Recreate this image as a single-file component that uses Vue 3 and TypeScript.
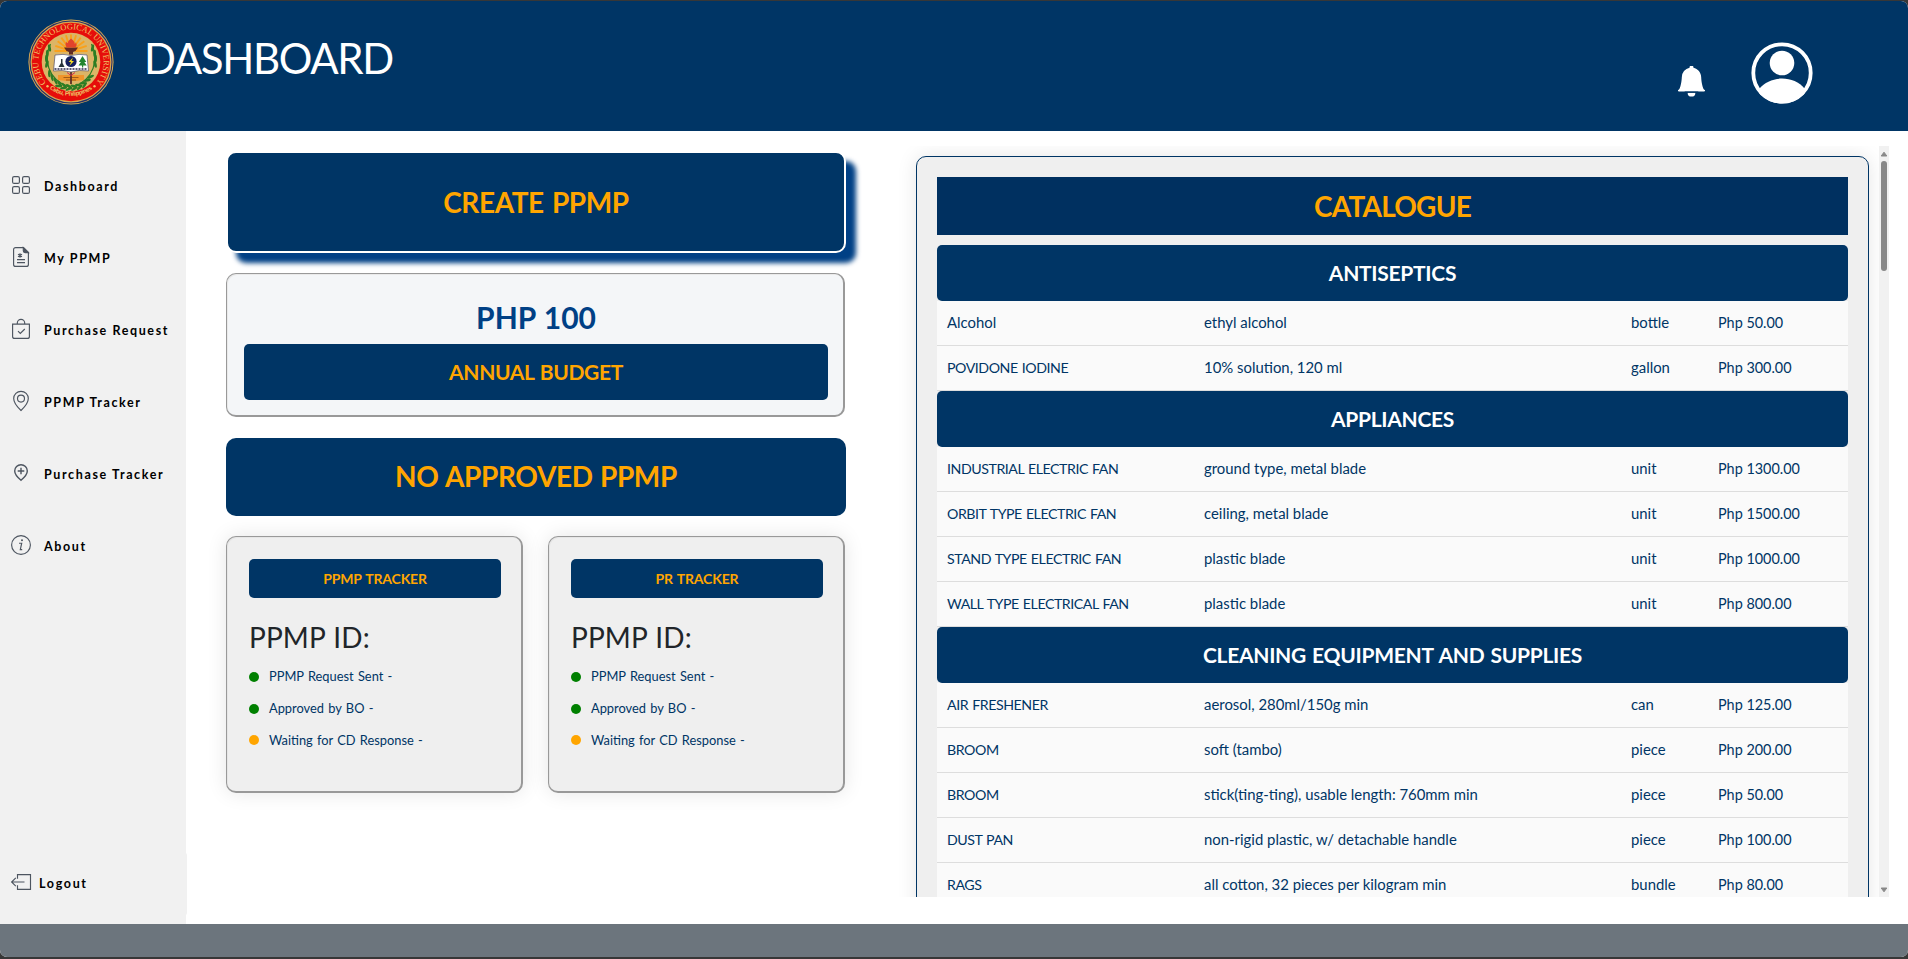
<script setup lang="ts">
interface NavItem { label: string; icon: string }
interface Product { name: string; desc: string; unit: string; price: string }
interface Category { title: string; products: Product[] }
interface Step { label: string; state: 'done' | 'waiting' }

const navItems: NavItem[] = [
  { label: 'Dashboard', icon: 'grid' },
  { label: 'My PPMP', icon: 'file' },
  { label: 'Purchase Request', icon: 'bag' },
  { label: 'PPMP Tracker', icon: 'pin' },
  { label: 'Purchase Tracker', icon: 'pinplus' },
  { label: 'About', icon: 'info' },
]

const trackers: string[] = ['PPMP TRACKER', 'PR TRACKER']

const steps: Step[] = [
  { label: 'PPMP Request Sent -', state: 'done' },
  { label: 'Approved by BO -', state: 'done' },
  { label: 'Waiting for CD Response -', state: 'waiting' },
]

const p = (name: string, desc: string, unit: string, price: string): Product => ({ name, desc, unit, price })
const isCaps = (s: string): boolean => s === s.toUpperCase()

const categories: Category[] = [
  {
    title: 'ANTISEPTICS',
    products: [
      p('Alcohol', 'ethyl alcohol', 'bottle', 'Php 50.00'),
      p('POVIDONE IODINE', '10% solution, 120 ml', 'gallon', 'Php 300.00'),
    ],
  },
  {
    title: 'APPLIANCES',
    products: [
      p('INDUSTRIAL ELECTRIC FAN', 'ground type, metal blade', 'unit', 'Php 1300.00'),
      p('ORBIT TYPE ELECTRIC FAN', 'ceiling, metal blade', 'unit', 'Php 1500.00'),
      p('STAND TYPE ELECTRIC FAN', 'plastic blade', 'unit', 'Php 1000.00'),
      p('WALL TYPE ELECTRICAL FAN', 'plastic blade', 'unit', 'Php 800.00'),
    ],
  },
  {
    title: 'CLEANING EQUIPMENT AND SUPPLIES',
    products: [
      p('AIR FRESHENER', 'aerosol, 280ml/150g min', 'can', 'Php 125.00'),
      p('BROOM', 'soft (tambo)', 'piece', 'Php 200.00'),
      p('BROOM', 'stick(ting-ting), usable length: 760mm min', 'piece', 'Php 50.00'),
      p('DUST PAN', 'non-rigid plastic, w/ detachable handle', 'piece', 'Php 100.00'),
      p('RAGS', 'all cotton, 32 pieces per kilogram min', 'bundle', 'Php 80.00'),
    ],
  },
]

const rays: number[] = [-90, -72, -54, -36, -18, 0, 18, 36, 54, 72, 90]
const leaves: number[] = [0, 1, 2, 3, 4, 5, 6, 7, 8, 9, 10]
</script>

<template>
  <div class="window">
    <header class="topbar">
      <svg class="seal" viewBox="0 0 86 86">
        <defs>
          <path id="seal-top" d="M19.2 65.2 A32.6 32.6 0 1 1 66.8 65.2" />
          <path id="seal-bottom" d="M16.5 65.5 A36.6 36.6 0 0 0 69.5 65.5" />
        </defs>
        <circle cx="43" cy="43" r="42.6" fill="#d8a850" />
        <circle cx="43" cy="43" r="41" fill="none" stroke="#26306a" stroke-width="1.1" />
        <circle cx="43" cy="43" r="39.2" fill="#e60d0a" />
        <circle cx="43" cy="43" r="29.3" fill="#dcb566" />
        <g stroke="#f9a01b" stroke-width="1.9">
          <line v-for="a in rays" :key="a" x1="43" y1="28" x2="43" y2="15.5" :transform="`rotate(${a} 43 32)`" />
        </g>
        <g fill="none" stroke="#2c7d24" stroke-width="1.2">
          <path d="M22.5 25 C15.5 40 19 60 41 68" />
          <path d="M63.5 25 C70.5 40 67 60 45 68" />
        </g>
        <g fill="#2c7d24">
          <g v-for="k in leaves" :key="k">
            <g :transform="`rotate(${-k * 11.5 + 62} 43 43)`">
              <ellipse cx="43" cy="67.5" rx="3.7" ry="1.3" transform="rotate(28 43 67.5)" />
              <ellipse v-if="k > 2 && k < 9" cx="43" cy="70" rx="3.5" ry="1.2" transform="rotate(-24 43 70)" />
            </g>
          </g>
          <ellipse cx="18.9" cy="45" rx="1.5" ry="3.9" transform="rotate(14 18.9 45)" />
          <ellipse cx="67.1" cy="45" rx="1.5" ry="3.9" transform="rotate(-14 67.1 45)" />
          <ellipse cx="18.5" cy="39.5" rx="1.5" ry="3.9" />
          <ellipse cx="67.5" cy="39.5" rx="1.5" ry="3.9" />
          <ellipse cx="21.5" cy="29" rx="1.4" ry="3.7" transform="rotate(-12 21.5 29)" />
          <ellipse cx="64.5" cy="29" rx="1.4" ry="3.7" transform="rotate(12 64.5 29)" />
          <ellipse cx="19.3" cy="34.5" rx="1.4" ry="3.7" />
          <ellipse cx="66.7" cy="34.5" rx="1.4" ry="3.7" />
        </g>
        <path d="M30 56 h26 v5 l-9 1 h-8 l-9 -1z" fill="#f0952a" />
        <path d="M35.5 58.5h15M38 61h10" stroke="#8c4c14" stroke-width=".8" />
        <path d="M43 52 v13" stroke="#5a2f25" stroke-width="1.8" />
        <path d="M27 36 q8 -1.5 16 0.5 q8 -2 16 -0.5 l1.5 16 q-9 -1.5 -17.5 1 q-9 -2.5 -17.5 -1z" fill="#fff" stroke="#54506a" stroke-width=".7" />
        <path d="M26.5 50 h33" stroke="#28264c" stroke-width="1.7" stroke-dasharray="2 1" />
        <path d="M33 40 v4 l-2.5 4 h6 l-2 -4 v-4z" fill="#27333a" />
        <path d="M54.5 37 l-3.6 6 h2 l-2.4 3.5 h3.5 v2 h1.2 v-2 h3.5 l-2.4 -3.5 h2z" fill="#23852f" />
        <circle cx="43" cy="42.5" r="5.6" fill="#15205f" />
        <path d="M45 38.5 l-4.5 4.5 h2.5 l-1.5 3.7 l4.5 -4.7 h-2.5z" fill="#f6dd23" />
        <path d="M36 28.5 h14 l-2.5 3.5 -2.5 1 v2.5 h-4 v-2.5 l-2.5 -1z" fill="#632b22" />
        <path d="M43 19.500 q4 3 3.8 5.5 q1 -.5 1 -2 q2 4 -.8 5.5 h-8 q-2.500 -2 -.8 -6 q.6 1.8 1.6 1.6 q.2 -2.4 3.2 -4.6z" fill="#e2432b" />
        <path d="M39 53.5 l4 3 4 -3" fill="none" stroke="#d32a52" stroke-width="1" />
        <text class="seal-text"><textPath href="#seal-top" startOffset="50%" text-anchor="middle" textLength="147">CEBU TECHNOLOGICAL UNIVERSITY</textPath></text>
        <text class="seal-text seal-city"><textPath href="#seal-bottom" startOffset="50%" text-anchor="middle" textLength="46">Cebu, Philippines</textPath></text>
        <circle cx="19.5" cy="67.3" r="1.2" fill="#f0c267" />
        <circle cx="66.5" cy="67.3" r="1.2" fill="#f0c267" />
      </svg>
      <h1>DASHBOARD</h1>
      <svg class="bell" viewBox="0 0 16 16" fill="#fff">
        <path d="M8 16a2 2 0 0 0 2-2H6a2 2 0 0 0 2 2m.995-14.901a1 1 0 1 0-1.99 0A5 5 0 0 0 3 6c0 1.098-.5 6-2 7h14c-1.5-1-2-5.902-2-7 0-2.42-1.72-4.44-4.005-4.901" transform="translate(0 -.2)" />
        <path d="M1.400 12.700h13.200" stroke="#fff" stroke-width=".8" stroke-linecap="round" />
        <path d="M4.5 13.5h7" stroke="#003565" stroke-width=".7" />
      </svg>
      <svg class="avatar" viewBox="0 0 62 62">
        <defs><clipPath id="avatar-clip"><circle cx="31" cy="31" r="30.5" /></clipPath></defs>
        <circle cx="31" cy="31" r="28.7" fill="none" stroke="#fff" stroke-width="3.8" />
        <circle cx="31" cy="21" r="12.3" fill="#fff" />
        <path d="M8 47 C14 40 22 36.6 31 36.6 S48 40 54 47 V62 H8z" fill="#fff" clip-path="url(#avatar-clip)" />
      </svg>
    </header>

    <div class="body">
      <aside class="sidebar">
        <nav>
          <a v-for="item in navItems" :key="item.label" class="nav-item">
            <svg class="icon" viewBox="0 0 22 22" fill="none" stroke="#4d5560" stroke-width="1.15">
              <g v-if="item.icon === 'grid'">
                <rect x="2.6" y="2.6" width="6.8" height="6.8" rx="1.5" />
                <rect x="12.6" y="2.6" width="6.8" height="6.8" rx="1.5" />
                <rect x="2.6" y="12.6" width="6.8" height="6.8" rx="1.5" />
                <rect x="12.6" y="12.6" width="6.8" height="6.8" rx="1.5" />
              </g>
              <g v-else-if="item.icon === 'file'">
                <path d="M13.5 1.6H5.6a2 2 0 0 0-2 2v14.8a2 2 0 0 0 2 2h10.8a2 2 0 0 0 2-2V6.5z" />
                <path d="M13.3 1.6v3.2a1.8 1.8 0 0 0 1.8 1.8h3.3z" fill="#4d5560" />
                <path d="M7 13.6h8M7 16.6h8M10 7.2v4.600M8 8.3l4 2.4M12 8.3l-4 2.4" />
              </g>
              <g v-else-if="item.icon === 'bag'">
                <path d="M2.6 6.1h16.8v12.3a2 2 0 0 1-2 2H4.6a2 2 0 0 1-2-2z" />
                <path d="M7.3 6V5a3.7 3.7 0 0 1 7.4 0v1M8 13.2l2.3 2.3 4.5-4.5" />
              </g>
              <g v-else-if="item.icon === 'pin'">
                <path d="M11 20.5S3.7 13.8 3.7 8.6a7.3 7.3 0 0 1 14.6 0C18.3 13.8 11 20.5 11 20.5z" />
                <circle cx="11" cy="8.6" r="3.5" />
              </g>
              <g v-else-if="item.icon === 'pinplus'" stroke-width="1.4">
                <path d="M11 18.3S4.7 13 4.7 9a6.300 6.3 0 0 1 12.6 0C17.3 13 11 18.3 11 18.3z" />
                <path d="M11 5.7v6.6M7.7 9h6.6" />
              </g>
              <g v-else>
                <circle cx="11" cy="11" r="9.4" />
                <path d="M9 9.2h2.7L10.3 15.6H12.2" />
                <circle cx="12" cy="6.3" r="1" fill="#4d5560" stroke="none" />
              </g>
            </svg>
            <span>{{ item.label }}</span>
          </a>
        </nav>
        <a class="logout">
          <svg class="icon" viewBox="0 0 22 22" fill="none" stroke="#4d5560" stroke-width="1.15">
            <path d="M7.5 7.8V3.6h13v14.8h-13v-4.2M14.5 11H1.7M5.8 6.8L1.6 11l4.2 4.2" />
          </svg>
          <span>Logout</span>
        </a>
      </aside>

      <main class="content">
        <section class="left">
          <button class="create">CREATE PPMP</button>
          <div class="budget">
            <div class="amount">PHP 100</div>
            <div class="budget-label">ANNUAL BUDGET</div>
          </div>
          <div class="approved">NO APPROVED PPMP</div>
          <div class="trackers">
            <div v-for="t in trackers" :key="t" class="tracker">
              <div class="tracker-title">{{ t }}</div>
              <h2>PPMP ID:</h2>
              <ul>
                <li v-for="s in steps" :key="s.label"><i :class="s.state"></i><span>{{ s.label }}</span></li>
              </ul>
            </div>
          </div>
        </section>

        <section class="scroller">
          <div class="catalogue">
            <h3>CATALOGUE</h3>
            <template v-for="c in categories" :key="c.title">
              <h4>{{ c.title }}</h4>
              <div v-for="(r, i) in c.products" :key="i" class="row">
                <span :class="{ caps: isCaps(r.name) }">{{ r.name }}</span>
                <span>{{ r.desc }}</span>
                <span>{{ r.unit }}</span>
                <span class="price">{{ r.price }}</span>
              </div>
            </template>
          </div>
        </section>
        <div class="scrollbar">
          <svg viewBox="0 0 10 15"><path d="M5 6.200 L7.8 10 H2.2z" fill="#888" stroke="#888" stroke-linejoin="round" /></svg>
          <div class="thumb"></div>
          <svg class="down" viewBox="0 0 10 15"><path d="M5 9.8 L7.8 6 H2.2z" fill="#888" stroke="#888" stroke-linejoin="round" /></svg>
        </div>
      </main>
    </div>
    <footer></footer>
  </div>
</template>

<style>
html,
body {
  margin: 0;
  background: #373737;
  overflow: hidden;
}
</style>

<style scoped>
* {
  box-sizing: border-box;
}
.window {
  width: 1908px;
  height: 956px;
  margin-top: 1px;
  border-radius: 7px;
  overflow: hidden;
  background: #fff;
  font-family: Lato, Calibri, sans-serif;
  display: flex;
  flex-direction: column;
}
h1, h2, h3, h4, ul {
  margin: 0;
  padding: 0;
  font-weight: 400;
}
.topbar {
  height: 130px;
  flex: none;
  background: #003565;
  display: flex;
  align-items: flex-start;
  padding-left: 28px;
}
.seal {
  width: 86px;
  height: 86px;
  margin-top: 18px;
}
.seal-text {
  font: 8.4px "Liberation Serif", serif;
  fill: #f0c267;
}
.seal-city {
  font: 700 6.2px "Liberation Sans", sans-serif;
}
.topbar h1 {
  margin: 32px 0 0 30px;
  font-size: 42px;
  line-height: 50px;
  letter-spacing: -1.35px;
  color: #fff;
  width: 1532px;
}
.bell {
  width: 31px;
  height: 31px;
  margin-top: 65px;
}
.avatar {
  width: 62px;
  height: 62px;
  margin: 41px 0 0 44px;
}
.body {
  height: 793px;
  flex: none;
  display: flex;
}
.sidebar {
  width: 187px;
  display: flex;
  flex-direction: column;
  justify-content: space-between;
  background: linear-gradient(#f1f1f1, #f1f1f1) 0 0 / 186px 100% no-repeat;
}
nav {
  padding-top: 18px;
}
.nav-item {
  display: flex;
  align-items: center;
  height: 72px;
  padding-left: 10px;
  font-size: 12.5px;
  font-weight: 700;
  letter-spacing: 1.62px;
  color: #000;
}
.nav-item span {
  margin: 2px 0 0 12px;
}
.icon {
  width: 22px;
  height: 22px;
  flex: none;
}
.logout {
  display: flex;
  align-items: center;
  height: 62px;
  margin-bottom: 9px;
  padding-left: 10px;
  background: #f1f1f1;
  border-radius: 0 2px 2px 0;
  font-size: 12.5px;
  font-weight: 700;
  letter-spacing: 1.67px;
}
.logout .icon {
  margin-top: -5px;
}
.logout span {
  margin-left: 7px;
  margin-top: -1px;
}
.content {
  flex: 1;
  display: flex;
}
.left {
  width: 620px;
  margin: 20px 0 0 39px;
  word-spacing: 0.06em;
}
.create {
  display: block;
  width: 620px;
  height: 102px;
  padding: 0 0 1px;
  border: 2px solid #fff;
  border-radius: 10px;
  background: #003565;
  box-shadow: 10px 10px 5px #004085;
  color: orange;
  font: 700 28px Lato, Calibri, sans-serif;
  letter-spacing: -0.4px;
  word-spacing: 0.06em;
}
.budget {
  width: 619px;
  height: 144px;
  margin-top: 20px;
  padding: 26px 15px 0 17px;
  border: 1px solid #999;
  border-width: 1px 2px 2px 1px;
  border-radius: 10px;
  background: #f4f6f8;
  box-shadow: inset 1px 1px 0 #eaeaea;
  text-align: center;
}
.amount {
  height: 44px;
  line-height: 34px;
  font-size: 30px;
  font-weight: 700;
  color: #004085;
}
.budget-label {
  height: 56px;
  line-height: 55px;
  border-radius: 5px;
  background: #003565;
  color: orange;
  font-size: 21px;
  font-weight: 700;
  letter-spacing: -0.35px;
}
.approved {
  height: 78px;
  margin-top: 21px;
  border-radius: 10px;
  background: #003565;
  color: orange;
  text-align: center;
  font-size: 28px;
  line-height: 77px;
  font-weight: 700;
  letter-spacing: -0.38px;
}
.trackers {
  display: flex;
  gap: 25px;
  margin-top: 20px;
}
.tracker {
  width: 297px;
  height: 257px;
  padding: 22px 20px 0 22px;
  border: 1px solid #999;
  border-width: 1px 2px 2px 1px;
  border-radius: 10px;
  background: #efefef;
  box-shadow: 0 0 20px rgba(0, 0, 0, 0.1), inset 1px 1px 0 #e6e6e6;
}
.tracker-title {
  width: 252px;
  height: 39px;
  line-height: 39px;
  border-radius: 5px;
  background: #003565;
  color: orange;
  text-align: center;
  font-size: 14px;
  font-weight: 700;
  letter-spacing: -0.15px;
}
.tracker h2 {
  margin-top: 20px;
  font-size: 28px;
  line-height: 38px;
  letter-spacing: 0.1px;
  color: #212529;
}
.tracker ul {
  list-style: none;
  margin-top: 5px;
}
.tracker li {
  display: flex;
  align-items: center;
  height: 31.7px;
  font-size: 12.85px;
  color: #003565;
}
.tracker li span {
  margin-top: -1px;
}
.tracker i {
  width: 10px;
  height: 10px;
  margin-right: 10px;
  border-radius: 50%;
  background: green;
}
.tracker i.waiting {
  background: orange;
}
.scroller {
  width: 983px;
  height: 751px;
  margin: 15px 0 0 50px;
  padding: 10px 10px 0 20px;
  overflow: hidden;
}
.catalogue {
  width: 953px;
  height: 900px;
  padding: 20px;
  border: 1px solid #003565;
  border-radius: 10px;
  background: #efefef;
  box-shadow: 0 0 20px rgba(0, 0, 0, 0.1);
}
.catalogue h3 {
  height: 58px;
  line-height: 58px;
  margin-bottom: 10px;
  background: #003060;
  color: orange;
  text-align: center;
  font-size: 28px;
  font-weight: 700;
  letter-spacing: -0.75px;
}
.catalogue h4 {
  height: 56px;
  line-height: 56px;
  border-radius: 5px;
  background: #003565;
  color: #fff;
  text-align: center;
  font-size: 21px;
  font-weight: 700;
  letter-spacing: -0.28px;
  word-spacing: 0.06em;
}
.row {
  display: grid;
  grid-template-columns: 257px 427px 87px 1fr;
  align-items: center;
  height: 45px;
  padding: 0 0 2px 10px;
  border-bottom: 1px solid #ddd;
  background: #fafafa;
  color: #003565;
  font-size: 14.9px;
}
.row .caps {
  font-size: 14.2px;
  letter-spacing: -0.45px;
  word-spacing: 0.06em;
}
.row .price {
  font-size: 14.4px;
}
.scrollbar {
  width: 10px;
  height: 751px;
  margin-top: 15px;
  background: #f1f1f1;
  display: flex;
  flex-direction: column;
}
.scrollbar svg {
  display: block;
  height: 15px;
}
.scrollbar .down {
  margin-top: auto;
}
.thumb {
  width: 6px;
  height: 110px;
  margin: 0 auto;
  border-radius: 3px;
  background: #888;
}
footer {
  flex: 1;
  background: #6c757d;
}
</style>
